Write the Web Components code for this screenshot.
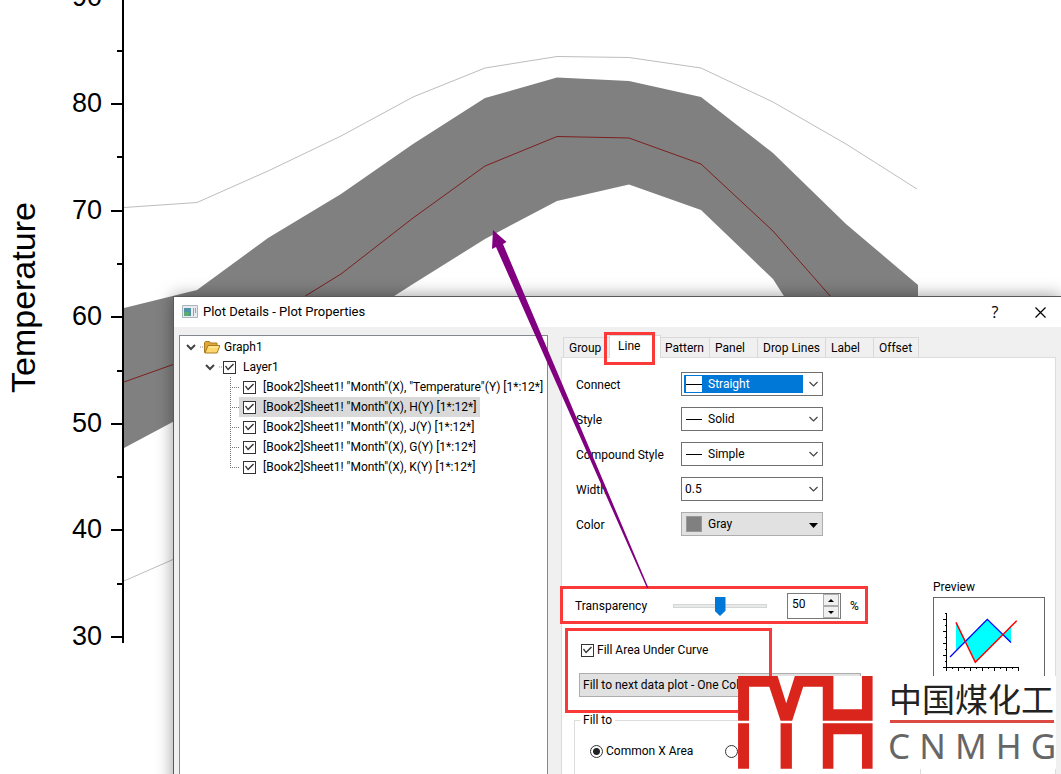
<!DOCTYPE html>
<html lang="en">
<head>
<meta charset="utf-8">
<title>Plot Details - Plot Properties</title>
<style>
  html, body { margin: 0; height: 100%; background: #fff; }
  body { font: 12px/20px Roboto, "Noto Sans", sans-serif; color: #000; overflow: hidden; position: relative; }
</style>
</head>
<body>
<plot-workspace></plot-workspace>
<script>
const define = (name, html, setup) => {
  const template = document.createElement('template');
  template.innerHTML = html;
  customElements.define(name, class extends HTMLElement {
    constructor() {
      super();
      this.attachShadow({ mode: 'open' }).append(template.content.cloneNode(true));
    }
    connectedCallback() { if (setup) setup(this, this.shadowRoot); }
  });
};

/* Graph page with its axis and data curves */
define('temperature-chart', `
<style>
  :host { display: block; overflow: hidden; }
  svg { display: block; overflow: visible; font-family: "Liberation Sans", Arial, sans-serif; }
  .num { font-size: 27px; text-anchor: end; }
  .axis-title { font-size: 34px; }
</style>
<svg width="930" height="700" viewBox="0 0 930 700" role="img" aria-label="Temperature by month">
  <path fill="#808080" d="M124 308 197 290 268 238 341 194 413 144 485 98 557 77.500 629 81 701 97 773 153 846 224 918 285V340H812L773 279 701 210 629 184.500 557 201 485 239 413 284 341 330 268 370 197 409 124 448Z"/>
  <g fill="none" stroke-width="1">
    <path stroke="#7d1f1f" d="M124 382 197 356 268 319 341 274 413 218 485 166 557 136.500 629 138 701 164 773 231 846 314"/>
    <path stroke="#bdbdbd" d="M124 207.500 197 202.500 268 171 341 136 413 97 485 68 557 56.500 629 57.500 701 68 773 102 846 144 917 189"/>
    <path stroke="#bdbdbd" d="M124 581 197 549"/>
  </g>
  <path stroke="#000" stroke-width="2" fill="none" d="M123 0V643M111 104H123M111 211H123M111 317H123M111 424H123M111 530H123M111 637H123M117 51H123M117 157H123M117 264H123M117 371H123M117 477H123M117 584H123"/>
  <g class="num">
    <text x="102" y="6">90</text><text x="102" y="112">80</text><text x="102" y="219">70</text>
    <text x="102" y="325">60</text><text x="102" y="432">50</text><text x="102" y="538">40</text><text x="102" y="645">30</text>
  </g>
  <text class="axis-title" transform="translate(35 393) rotate(-90)">Temperature</text>
</svg>`);

define('check-box', `
<style>
  :host { display: inline-flex; }
  label { display: flex; align-items: center; white-space: nowrap; }
  input { appearance: none; flex: none; width: 13px; height: 13px; margin: 0; border: 1px solid #333; background: #fff; display: block; box-sizing: border-box; }
  input:checked::before { content: ""; display: block; width: 11px; height: 11px; background: #333;
    clip-path: polygon(1px 5px, 2px 4px, 4px 7px, 9px 2px, 10px 3px, 4px 9px); }
  span { padding-left: 3px; }
  :host([tree]) span { padding: 0 4px 0 7px; }
</style>
<label><input type="checkbox" checked><span><slot></slot></span></label>`);

define('radio-option', `
<style>
  :host { display: inline-flex; }
  label { display: flex; align-items: center; gap: 3px; white-space: nowrap; }
  input { appearance: none; flex: none; box-sizing: border-box; width: 13px; height: 13px; margin: 0; border: 1px solid #333; border-radius: 50%; background: #fff; }
  input:checked { background: radial-gradient(circle, #222 3px, #fff 4px); }
</style>
<label><input type="radio"><slot></slot></label>`, (host, root) => {
  root.querySelector('input').checked = host.hasAttribute('checked');
});

/* Tree entry: level 0 folder, level 1 layer, level 2 data plot */
define('tree-item', `
<style>
  :host { display: flex; align-items: center; height: 20px; white-space: nowrap; }
  svg { flex: none; display: block; }
  .twist, .folder, .stem { display: none; }
  :host([level="0"]) { padding-left: 6px; }
  :host([level="1"]) { padding-left: 25px; }
  :host([level="2"]) { padding-left: 49px; }
  :host([level="0"]) .twist, :host([level="0"]) .folder, :host([level="1"]) .twist, :host([level="2"]) .stem { display: block; }
  :host([level="0"]) .label { padding-left: 4px; }
  .label { display: flex; align-items: center; height: 20px; }
  :host([level="2"]) .label { padding-left: 4px; }
  :host([selected]) .label { background: #d9d9d9; }
</style>
<svg class="twist" width="18" height="20" viewBox="0 0 18 20"><path d="M1 8l4 4 4-4" fill="none" stroke="#444" stroke-width="2"/><path d="M14 10h4" stroke="#888" stroke-dasharray="1 1"/></svg>
<svg class="folder" width="16" height="16" viewBox="0 0 16 16"><path d="M.5 13.500V3.500l1-1h4l1 1.500H13V13.500Z" fill="#e0a83a" stroke="#a87a20"/><path d="M1 14 4 6.500h12L13 14Z" fill="#ffd76e" stroke="#a87a20"/><path d="M5 8h9" stroke="#fff0b8"/></svg>
<svg class="stem" width="10" height="20" viewBox="0 0 10 20"><path class="down" d="M1.500 0V20M1 10.500H10" fill="none" stroke="#777" stroke-dasharray="1 1"/></svg>
<span class="label"><slot></slot></span>`, (host, root) => {
  if (host.hasAttribute('last')) root.querySelector('.down').setAttribute('d', 'M1.500 0V10M1 10.500H10');
});

/* Drop-down with optional line or colour sample */
define('combo-box', `
<style>
  :host { display: flex; align-items: center; box-sizing: border-box; height: 24px; border: 1px solid #707070; background: #fff; }
  .face { flex: 1; display: flex; align-items: center; height: 18px; margin-left: 2px; }
  .line { display: none; width: 16px; height: 16px; margin-left: 2px; background: linear-gradient(#000, #000) 0 8px / 16px 1px no-repeat #fff; }
  .swatch { display: none; box-sizing: border-box; width: 16px; height: 16px; margin-left: 2px; background: #808080; border: 1px solid #999; }
  select { appearance: none; flex: 1; min-width: 0; height: 18px; border: 0; margin: 0; padding: 0 0 0 1px; background: transparent; font: inherit; line-height: 18px; color: inherit; outline: 0; }
  svg { flex: none; display: block; margin: 0 3px 0 5px; }
  .fat { display: none; }
  :host([sample="line"]) .line { display: block; }
  :host([sample="color"]) .swatch { display: block; }
  :host([sample]) select { padding-left: 6px; }
  :host([focused]) .face { background: #0078d7; color: #fff; }
  :host([flat]) { background: #e1e1e1; border-color: #adadad; }
  :host([flat]) .thin { display: none; }
  :host([flat]) .fat { display: block; }
</style>
<div class="face"><span class="line"></span><span class="swatch"></span><select></select></div>
<svg class="thin" width="11" height="10" viewBox="0 0 11 10"><path d="M1.500 3l4 4 4-4" fill="none" stroke="#444" stroke-width="1.200"/></svg>
<svg class="fat" width="11" height="10" viewBox="0 0 11 10"><path d="M1 4h9L5.500 9z"/></svg>`, (host, root) => {
  const select = root.querySelector('select');
  select.setAttribute('aria-label', host.getAttribute('label'));
  select.replaceChildren(new Option(host.getAttribute('value')));
});

define('tab-strip', `
<style>
  :host { display: flex; align-items: flex-end; height: 23px; padding-left: 2px; margin-bottom: -1px; position: relative; }
  button { flex: none; box-sizing: border-box; height: 20px; margin: 0 0 1px; padding: 0 0 0 5px; font: inherit; color: inherit; text-align: left; white-space: nowrap;
    background: #f0f0f0; border: 1px solid #d9d9d9; border-width: 1px 0 0 1px; }
  button:last-child { border-right-width: 1px; }
  .on { height: 23px; margin-bottom: 0; padding: 0 0 3px 8px; background: #fff; border-right-width: 1px; }
  .on + button { border-left: 0; padding-left: 4px; }
  .w46 { width: 46px; } .w52 { width: 52px; } .w48 { width: 48px; } .w68 { width: 68px; }
</style>
<button class="w46">Group</button><button class="w52 on">Line</button><button class="w48">Pattern</button><button class="w48">Panel</button><button class="w68">Drop Lines</button><button class="w48">Label</button><button class="w46">Offset</button>`);

define('plot-preview', `
<style>
  :host { display: block; width: 112px; }
  p { margin: 0; }
  .frame { box-sizing: border-box; width: 112px; height: 112px; border: 1px solid #666; }
  svg { display: block; }
</style>
<p>Preview</p>
<div class="frame"><svg width="110" height="110" viewBox="1 1 110 110">
  <path fill="#0ff" d="M23 25V54L32.500 44ZM32.500 44 54.300 22 70 38 42.300 65ZM70 38 78 29V45.300Z"/>
  <path stroke="#00f" fill="none" stroke-width="1.300" d="M17 60 54.300 22.300 78 45.500"/>
  <path stroke="#f00" fill="none" stroke-width="1.500" d="M23 25.300 42.300 65.300 83.700 23.700"/>
  <path stroke="#000" fill="none" d="M13.500 16V74M10 70.500H86M10 22.500h4M10 34.500h4M10 46.500h4M10 58.500h4M12 16.500h2M12 28.500h2M12 40.500h2M12 52.500h2M12 64.500h2M25.500 70v4M37.500 70v4M49.500 70v4M61.500 70v4M73.500 70v4M85.500 70v4M19.500 70v2M31.500 70v2M43.500 70v2M55.500 70v2M67.500 70v2M79.500 70v2"/>
</svg></div>`);

define('transparency-field', `
<style>
  :host { display: flex; align-items: center; height: 26px; }
  label { flex: none; width: 98px; }
  .slider { appearance: none; width: 94px; height: 20px; margin: 0 20px 0 0; background: linear-gradient(#e7eaea, #e7eaea) 0 8px / 94px 4px no-repeat; }
  .slider::-webkit-slider-runnable-track { height: 4px; border: 1px solid #d6d6d6; box-sizing: border-box; }
  .slider::-webkit-slider-thumb { appearance: none; width: 11px; height: 19px; margin-top: -8px; background: #0078d7; clip-path: polygon(0 0, 100% 0, 100% 72%, 50% 100%, 0 72%); }
  .spin { display: flex; box-sizing: border-box; width: 54px; height: 26px; border: 1px solid #7a7a7a; padding: 0 1px; }
  .spin input { flex: 1; min-width: 0; border: 0; padding: 0 0 4px 3px; font: inherit; outline: 0; }
  .arrows { display: flex; flex-direction: column; width: 16px; }
  .arrows button { flex: 1; display: grid; place-items: center; padding: 0; border: 1px solid #adadad; background: #f0f0f0; }
  .unit { margin-left: 9px; }
</style>
<label for="t">Transparency</label>
<input class="slider" type="range" value="50" aria-label="Transparency">
<span class="spin"><input id="t" type="text" value="50"><span class="arrows">
<button aria-label="Increase"><svg width="6" height="3"><path d="M0 3h6L3 0z"/></svg></button>
<button aria-label="Decrease"><svg width="6" height="3"><path d="M0 0h6L3 3z"/></svg></button></span></span>
<span class="unit">%</span>`);

define('line-settings', `
<style>
  :host { display: block; flex: none; width: 371px; box-sizing: border-box; padding: 14px 12px 0 13px; }
  .fields { display: grid; grid-template-columns: 106px 142px; grid-auto-rows: 24px; row-gap: 11px; align-items: center; }
  .fields span { padding: 2px 0 0 1px; }
  transparency-field { margin-top: 57px; }
  .fill { margin: 21px 0 0 6px; height: 20px; display: flex; }
  .mode { width: 282px; margin: 13px 0 0 4px; }
  fieldset { min-width: 0; height: 120px; margin: 14px 0 0 -1px; padding: 12px 0 0 15px; border: 1px solid #dcdcdc; }
  legend { margin-left: -10px; padding: 0 3px; line-height: 18px; }
  .choices { display: flex; gap: 32px; }
</style>
<div class="fields">
  <span>Connect</span><combo-box label="Connect" sample="line" value="Straight" focused></combo-box>
  <span>Style</span><combo-box label="Style" sample="line" value="Solid"></combo-box>
  <span>Compound Style</span><combo-box label="Compound Style" sample="line" value="Simple"></combo-box>
  <span>Width</span><combo-box label="Width" value="0.5"></combo-box>
  <span>Color</span><combo-box label="Color" sample="color" value="Gray" flat></combo-box>
</div>
<transparency-field></transparency-field>
<check-box class="fill">Fill Area Under Curve</check-box>
<combo-box class="mode" label="Fill mode" value="Fill to next data plot - One Color" flat></combo-box>
<fieldset><legend>Fill to</legend><div class="choices"><radio-option checked>Common X Area</radio-option><radio-option></radio-option></div></fieldset>`);

define('plot-dialog', `
<style>
  :host { display: flex; flex-direction: column; box-sizing: border-box; border: 1px solid #5a5a5a; border-width: 1px 0 0 1px; background: #f0f0f0; box-shadow: 0 0 16px rgba(0, 0, 0, .4); overflow: hidden; }
  header { flex: none; display: flex; align-items: center; height: 30px; padding: 0 12px 0 8px; background: #fff; }
  h1 { flex: 1; margin: 0 0 0 5px; font-size: 13px; font-weight: 400; }
  header button { border: 0; padding: 0; background: none; font: 16px/20px "Open Sans", sans-serif; width: 18px; height: 20px; display: grid; place-items: center; }
  header button + button { margin-left: 27px; }
  .body { flex: 1; min-height: 0; display: flex; padding: 8px 5px 0; }
  .tree { flex: none; box-sizing: border-box; width: 369px; margin-right: 13px; padding-top: 1px; background: #fff; border: 1px solid #828790; }
  .right { flex: 1; min-width: 0; display: flex; flex-direction: column; }
  .page { flex: 1; min-height: 0; display: flex; background: #fff; border: 1px solid #dcdcdc; overflow: hidden; }
  plot-preview { margin-top: 219px; flex: none; }
</style>
<header>
  <svg width="16" height="14" viewBox="0 0 16 14"><path fill="#e8ecf0" stroke="#a9b4bd" d="M.5.5h15v12H.5z"/><path fill="#4f93a8" d="M2 3h7v8H2z"/><path fill="#5daa72" d="M2 7h5v4H2z"/><path fill="#8ba2bd" d="M11 3h1v8h-1zM13 3h1v5h-1z"/></svg>
  <h1>Plot Details - Plot Properties</h1>
  <button aria-label="Help">?</button>
  <button aria-label="Close"><svg width="11" height="11"><path d="M.5.5l10 10M10.500.5l-10 10" stroke="#000" stroke-width="1.200"/></svg></button>
</header>
<div class="body">
  <div class="tree">
    <tree-item level="0">Graph1</tree-item>
    <tree-item level="1"><check-box tree>Layer1</check-box></tree-item>
    <tree-item level="2"><check-box tree>[Book2]Sheet1! "Month"(X), "Temperature"(Y) [1*:12*]</check-box></tree-item>
    <tree-item level="2" selected><check-box tree>[Book2]Sheet1! "Month"(X), H(Y) [1*:12*]</check-box></tree-item>
    <tree-item level="2"><check-box tree>[Book2]Sheet1! "Month"(X), J(Y) [1*:12*]</check-box></tree-item>
    <tree-item level="2"><check-box tree>[Book2]Sheet1! "Month"(X), G(Y) [1*:12*]</check-box></tree-item>
    <tree-item level="2" last><check-box tree>[Book2]Sheet1! "Month"(X), K(Y) [1*:12*]</check-box></tree-item>
  </div>
  <div class="right">
    <tab-strip></tab-strip>
    <div class="page"><line-settings></line-settings><plot-preview></plot-preview></div>
  </div>
</div>`);

/* Red frames and the purple arrow drawn over the window */
define('call-outs', `
<style>:host { display: block; pointer-events: none; } svg { display: block; overflow: visible; }</style>
<svg width="880" height="720" viewBox="0 0 880 720" aria-hidden="true">
  <g fill="none" stroke="#fa3939" stroke-width="3">
    <rect x="605.500" y="333.500" width="48" height="30"/>
    <rect x="561.500" y="587.500" width="305" height="35"/>
    <rect x="566.500" y="629.500" width="204" height="82"/>
  </g>
  <path fill="#800080" d="M493 230 506.500 242 503 244 648.500 588H647L496 247 492 249Z"/>
</svg>`);

define('brand-mark', `
<style>
  :host { display: flex; gap: 16px; box-sizing: border-box; width: 318px; height: 93px; background: #fff; overflow: hidden; }
  svg { flex: none; display: block; }
  .words { flex: 1; white-space: nowrap; }
  .cn { font: 33px/44px "Noto Sans CJK SC", sans-serif; color: #222; }
  .rule { height: 3px; background: #dc4a43; margin: 0 2px 0 1px; }
  .en { font: 35px/46px "Noto Sans", sans-serif; color: #666; margin-left: -1px; }
</style>
<svg width="135" height="93" viewBox="549 318 406 280" role="img" aria-label="CNMHG logo"><path fill="#da251c" d="M549 318H668L694 400 720 318H836V418H922V318H954V453H804V350H745L712 453H677L643 350H582V453H549ZM549 460H582V597H549ZM677 460H711V597H677ZM804 460H954V597H922V493H836V597H804Z"/></svg>
<div class="words"><div class="cn" lang="zh">中国煤化工</div><div class="rule"></div><div class="en">C N M H G</div></div>`);

define('plot-workspace', `
<style>
  :host { display: block; position: relative; height: 100%; overflow: hidden; }
  plot-dialog { position: absolute; left: 173px; top: 296px; right: 0; bottom: -20px; }
  call-outs { position: absolute; left: 0; top: 0; }
  brand-mark { position: absolute; right: 5px; bottom: 5px; }
</style>
<temperature-chart></temperature-chart>
<plot-dialog></plot-dialog>
<call-outs></call-outs>
<brand-mark></brand-mark>`);
</script>
</body>
</html>
